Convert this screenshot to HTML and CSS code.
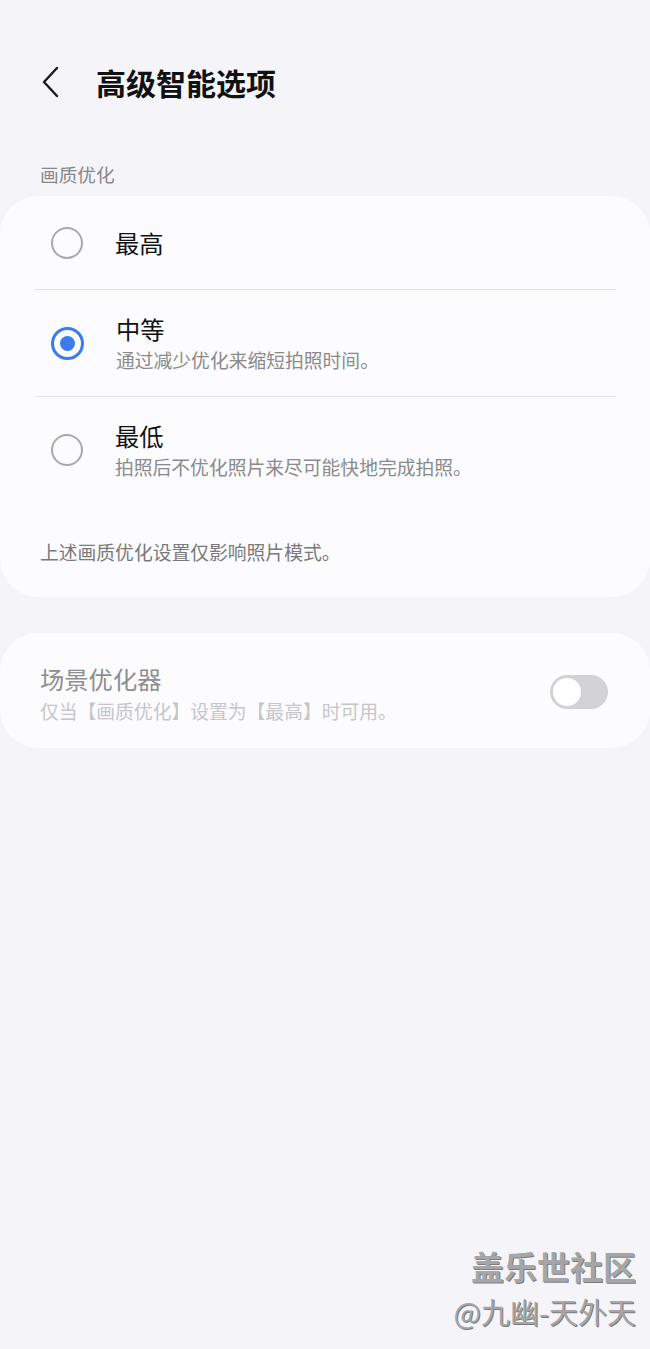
FILE: index.html
```html
<!DOCTYPE html>
<html lang="zh-CN">
<head>
  <meta charset="utf-8">
  <title>高级智能选项</title>
  <link rel="stylesheet" href="styles.css">
</head>
<body>
  <header class="app-bar">
    <svg class="back" width="20" height="32" viewBox="0 0 20 32">
      <path d="M16 2 L3 16 L16 30" fill="none" stroke="#1a1a1a" stroke-width="2.4" stroke-linecap="round" stroke-linejoin="round"/>
    </svg>
    <h1 class="title">高级智能选项</h1>
  </header>

  <div class="group-label">画质优化</div>

  <section class="card">
    <div class="options">
      <div class="option one-line">
        <span class="radio"></span>
        <div class="texts">
          <div class="opt-title">最高</div>
        </div>
      </div>
      <div class="option">
        <span class="radio on"></span>
        <div class="texts">
          <div class="opt-title">中等</div>
          <div class="opt-sub">通过减少优化来缩短拍照时间。</div>
        </div>
      </div>
      <div class="option">
        <span class="radio"></span>
        <div class="texts">
          <div class="opt-title">最低</div>
          <div class="opt-sub">拍照后不优化照片来尽可能快地完成拍照。</div>
        </div>
      </div>
    </div>
    <p class="note">上述画质优化设置仅影响照片模式。</p>
  </section>

  <section class="card switch-card">
    <div class="texts">
      <div class="sw-title">场景优化器</div>
      <div class="sw-sub">仅当【画质优化】设置为【最高】时可用。</div>
    </div>
    <span class="toggle"><span class="knob"></span></span>
  </section>

  <div class="watermark">
    <div class="wm-big">盖乐世社区</div>
    <div class="wm-small">@九幽-天外天</div>
  </div>
</body>
</html>
```

FILE: styles.css
```css
html, body {
  margin: 0;
  padding: 0;
}

body {
  width: 650px;
  min-height: 1349px;
  background: #f5f5f9;
  font-family: "Noto Sans CJK SC", "Noto Sans", sans-serif;
  color: #111;
  position: relative;
}

.app-bar {
  display: flex;
  align-items: center;
  height: 40px;
  margin-top: 62px;
  padding-left: 41px;
}

.back { display: block; }

.title {
  margin: 0 0 0 35px;
  font-size: 30px;
  line-height: 40px;
  font-weight: 700;
  color: #111;
}

.group-label {
  margin: 60px 0 10px 40px;
  font-size: 18.7px;
  line-height: 24px;
  color: #888;
}

.card {
  background: #fcfcfe;
  border-radius: 38px;
}

.options {
  padding: 0 34px;
}

.option {
  display: flex;
  align-items: center;
  height: 106px;
  padding-left: 17px;
  border-top: 1.5px solid #e4e4e8;
}

.option:first-child {
  border-top: none;
  height: 93px;
}

.radio {
  flex: none;
  width: 28px;
  height: 28px;
  border: 2.5px solid #a9a9ab;
  border-radius: 50%;
  margin-right: 32px;
  position: relative;
}

.radio.on {
  border: 3px solid #3a7ced;
  width: 27px;
  height: 27px;
}

.radio.on::after {
  content: "";
  position: absolute;
  left: 6px;
  top: 6px;
  width: 15px;
  height: 15px;
  border-radius: 50%;
  background: #3a7ced;
}

.opt-title {
  font-size: 24.3px;
  line-height: 30px;
  color: #111;
}

.opt-sub {
  margin-top: 4px;
  font-size: 18.8px;
  line-height: 24px;
  color: #8a8a8c;
}

.note {
  margin: 37px 0 0 40px;
  padding-bottom: 33px;
  font-size: 18.8px;
  line-height: 24px;
  color: #79797b;
}

.switch-card {
  margin-top: 36px;
  display: flex;
  align-items: center;
  justify-content: space-between;
  padding: 31px 42px 25px 40px;
}

.sw-title {
  font-size: 24.3px;
  line-height: 30px;
  color: #8e8e90;
}

.sw-sub {
  margin-top: 5px;
  font-size: 18.8px;
  line-height: 24px;
  color: #c6c6c8;
}

.toggle {
  flex: none;
  width: 58px;
  height: 34px;
  border-radius: 17px;
  background: #d3d3d6;
  position: relative;
  margin-top: -3px;
}

.knob {
  position: absolute;
  left: 3px;
  top: 3px;
  width: 28px;
  height: 28px;
  border-radius: 50%;
  background: #fff;
}

.watermark {
  position: absolute;
  right: 14px;
  top: 1242px;
  text-align: right;
  color: #a6a6a8;
  text-shadow: 1px 1px 0 rgba(40, 40, 40, 0.6);
}

.wm-big {
  font-size: 33px;
  line-height: 48px;
  font-weight: 700;
}

.wm-small {
  font-size: 29px;
  line-height: 43px;
}
```
